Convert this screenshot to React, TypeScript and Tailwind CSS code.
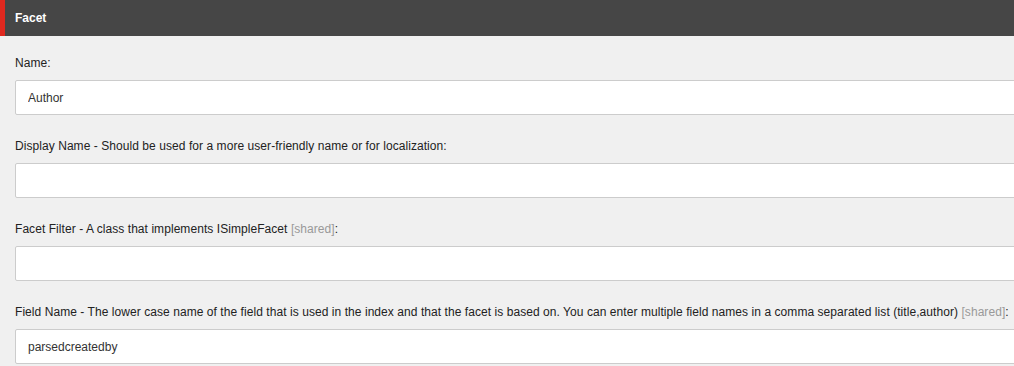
const fields = [
  { label: "Name", shared: false, value: "Author" },
  { label: "Display Name - Should be used for a more user-friendly name or for localization", shared: false, value: "" },
  { label: "Facet Filter - A class that implements ISimpleFacet", shared: true, value: "" },
  {
    label:
      "Field Name - The lower case name of the field that is used in the index and that the facet is based on. You can enter multiple field names in a comma separated list (title,author)",
    shared: true,
    value: "parsedcreatedby",
  },
];

export default function App() {
  return (
    <div className="h-[366px] w-full overflow-hidden bg-[#f0f0f0] font-['Liberation_Sans',Arial,sans-serif] text-[12px]">
      <div className="flex h-9 items-center border-l-[5px] border-[#e0281f] bg-[#464646] pl-[10px]">
        <span className="font-bold text-white">Facet</span>
      </div>
      <div className="flex flex-col gap-[23px] pl-[15px] pt-[19px]">
        {fields.map((f) => (
          <div key={f.label} className="flex flex-col gap-[9px]">
            <label className="whitespace-nowrap leading-4 tracking-[0.06px] text-[#222]">
              {f.label}
              {f.shared && <span className="text-[#999]"> [shared]</span>}:
            </label>
            <input
              readOnly
              value={f.value}
              className="h-[35px] w-[calc(100%+20px)] rounded-[2px] border border-[#ccc] bg-white pl-3 text-[12px] text-[#333] outline-none"
            />
          </div>
        ))}
      </div>
    </div>
  );
}
